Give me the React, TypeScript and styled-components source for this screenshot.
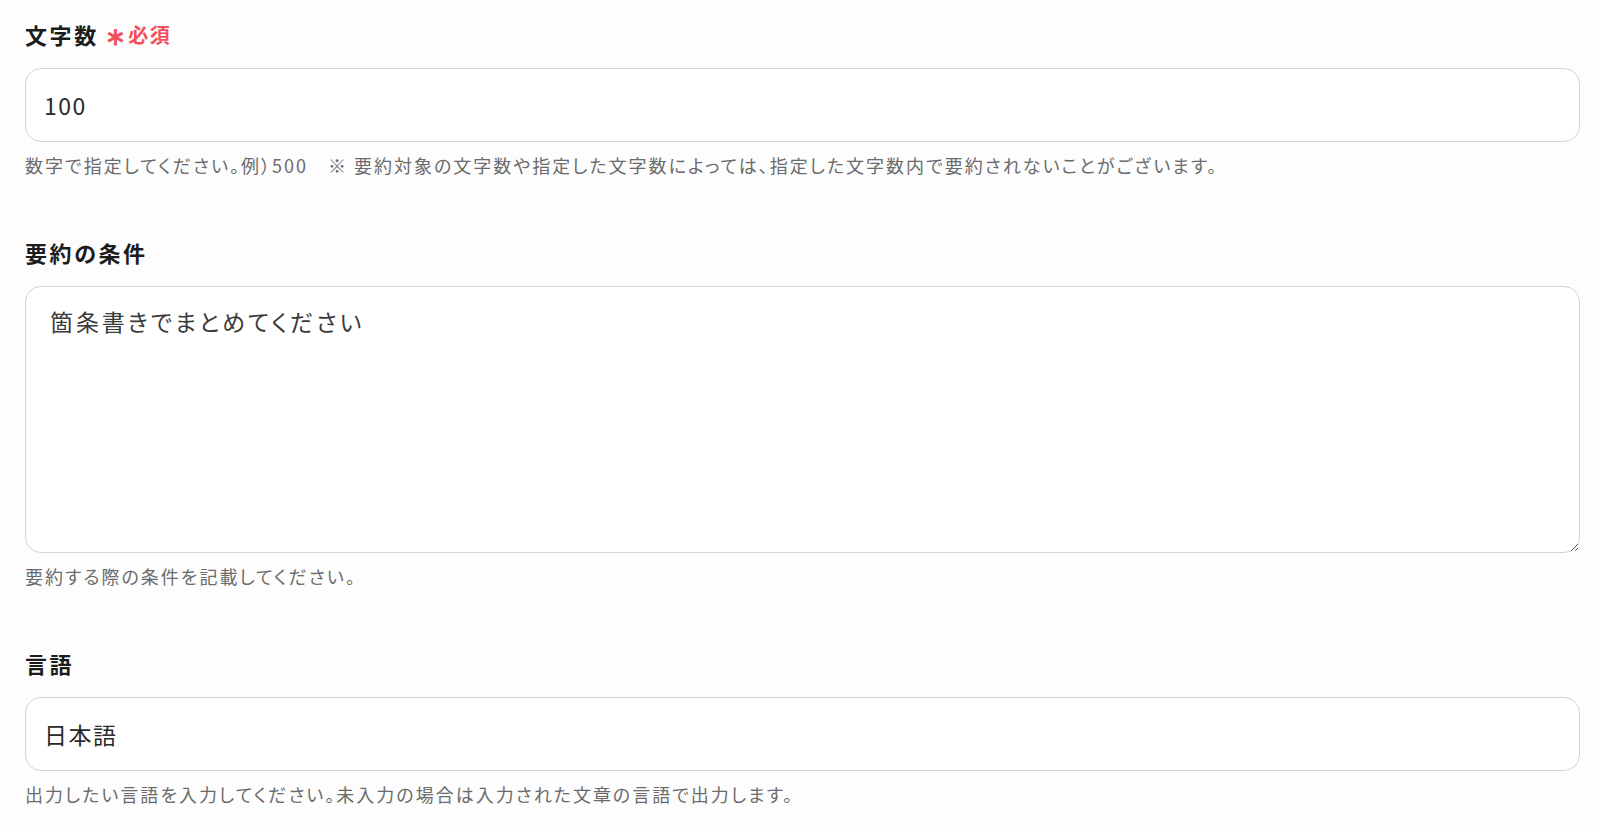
import { createGlobalStyle } from 'styled-components';
import styled from 'styled-components';

const GlobalStyle = createGlobalStyle`
  html, body {
    margin: 0;
    padding: 0;
    background: #fdfdfd;
  }
  body {
    font-family: "Noto Sans CJK JP", "Noto Sans", sans-serif;
    font-feature-settings: "palt";
    color: #222;
  }
`;

const Form = styled.form`
  display: flex;
  flex-direction: column;
  gap: 59px;
  padding: 19px 20px 0 25px;
`;

const Field = styled.div`
  display: flex;
  flex-direction: column;
`;

const Label = styled.label`
  display: flex;
  align-items: center;
  gap: 6px;
  height: 30px;
  margin-bottom: 19px;
  font-size: 22px;
  font-weight: 700;
  letter-spacing: 2.6px;
  color: #1c1c1c;
`;

const Required = styled.span`
  display: inline-flex;
  align-items: center;
  gap: 1px;
  font-size: 20px;
  font-weight: 700;
  color: #f0505b;
  letter-spacing: 1.5px;
`;

const Star = styled.span`
  font-size: 25px;
  line-height: 1;
  margin-top: 1px;
`;

const TextInput = styled.input`
  box-sizing: border-box;
  width: 100%;
  height: 74px;
  padding: 0 18px;
  border: 1.5px solid #d2d2dc;
  border-radius: 16px;
  background: #fff;
  font-family: inherit;
  font-feature-settings: "palt";
  font-size: 23px;
  letter-spacing: 1.5px;
  color: #2a2a2a;
  outline: none;
`;

const TextArea = styled.textarea`
  box-sizing: border-box;
  width: 100%;
  height: 267px;
  padding: 18px 24px;
  border: 1.5px solid #d2d2dc;
  border-radius: 16px;
  background: #fff;
  font-family: inherit;
  font-feature-settings: "palt";
  font-size: 23px;
  line-height: 1.45;
  letter-spacing: 2.9px;
  color: #3a3a3a;
  resize: vertical;
  outline: none;
  display: block;
`;

const Help = styled.p`
  margin: 10px 0 0;
  font-size: 18px;
  line-height: 26px;
  letter-spacing: 2px;
  color: #6b6b6b;
  white-space: pre;
`;

export default function App() {
  return (
    <>
      <GlobalStyle />
      <Form onSubmit={(e) => e.preventDefault()}>
        <Field>
          <Label>
            文字数
            <Required>
              <Star>∗</Star>必須
            </Required>
          </Label>
          <TextInput type="text" defaultValue="100" />
          <Help>
            {'数字で指定してください。例）500　※ 要約対象の文字数や指定した文字数によっては、指定した文字数内で要約されないことがございます。'}
          </Help>
        </Field>
        <Field>
          <Label>要約の条件</Label>
          <TextArea defaultValue="箇条書きでまとめてください" />
          <Help>要約する際の条件を記載してください。</Help>
        </Field>
        <Field>
          <Label>言語</Label>
          <TextInput type="text" defaultValue="日本語" />
          <Help>出力したい言語を入力してください。未入力の場合は入力された文章の言語で出力します。</Help>
        </Field>
      </Form>
    </>
  );
}
